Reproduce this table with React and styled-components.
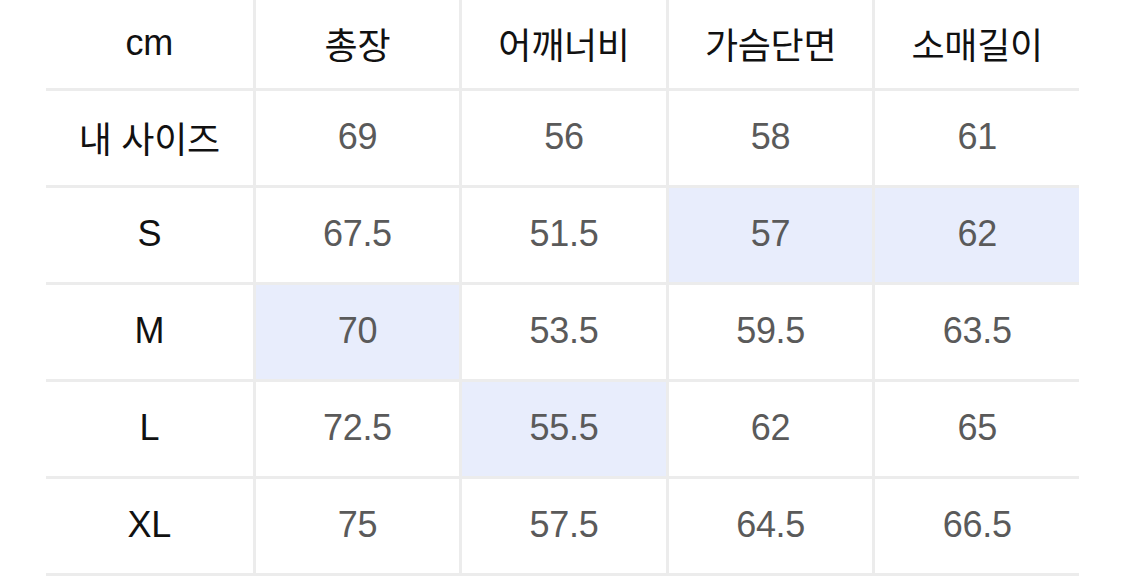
import React from "react";
import styled, { createGlobalStyle } from "styled-components";

const GlobalStyle = createGlobalStyle`
  html, body {
    margin: 0;
    padding: 0;
    background: #fff;
  }
  body {
    font-family: "Liberation Sans", "Noto Sans CJK KR", sans-serif;
    -webkit-font-smoothing: antialiased;
  }
`;

const Page = styled.div`
  width: 1125px;
  height: 585px;
  overflow: hidden;
  background: #fff;
`;

const Table = styled.div`
  margin-left: 46px;
  width: 1033px;
  display: grid;
  grid-template-columns: repeat(5, 1fr);
  grid-template-rows: 91px repeat(5, 97px);
`;

const Cell = styled.div`
  box-sizing: border-box;
  display: flex;
  align-items: center;
  justify-content: center;
  border-bottom: 3px solid #ececec;
  border-left: ${(p) => (p.$first ? "none" : "3px solid #ececec")};
  background: ${(p) => (p.$hl ? "#e8edfc" : "#fff")};
  color: ${(p) => (p.$dark ? "#111" : "#5a5a5a")};
  font-size: 36px;
  letter-spacing: -0.3px;
  padding-bottom: 3px;
`;

const headers = ["cm", "총장", "어깨너비", "가슴단면", "소매길이"];

const rows = [
  { name: "내 사이즈", values: ["69", "56", "58", "61"], hl: [] },
  { name: "S", values: ["67.5", "51.5", "57", "62"], hl: [2, 3] },
  { name: "M", values: ["70", "53.5", "59.5", "63.5"], hl: [0] },
  { name: "L", values: ["72.5", "55.5", "62", "65"], hl: [1] },
  { name: "XL", values: ["75", "57.5", "64.5", "66.5"], hl: [] },
];

export default function App() {
  return (
    <Page>
      <GlobalStyle />
      <Table>
        {headers.map((h, i) => (
          <Cell key={h} $first={i === 0} $dark>
            {h}
          </Cell>
        ))}
        {rows.map((r) => (
          <React.Fragment key={r.name}>
            <Cell $first $dark>
              {r.name}
            </Cell>
            {r.values.map((v, i) => (
              <Cell key={i} $hl={r.hl.includes(i)}>
                {v}
              </Cell>
            ))}
          </React.Fragment>
        ))}
      </Table>
    </Page>
  );
}
